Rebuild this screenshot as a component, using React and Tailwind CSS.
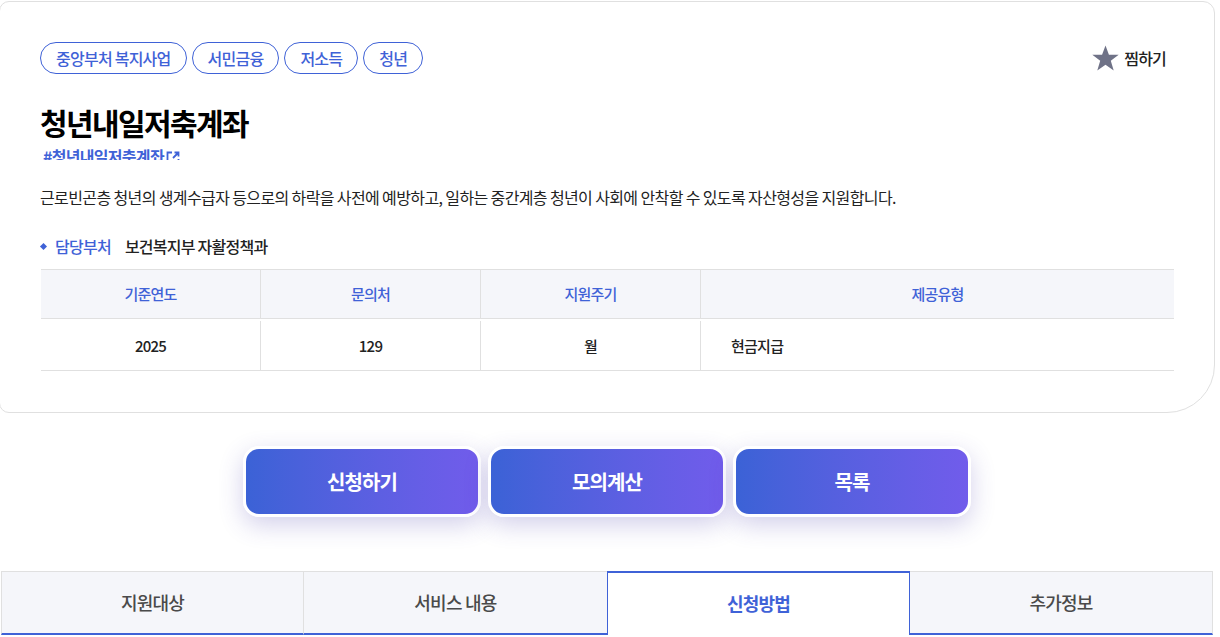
const FONT = "font-['Noto_Sans_CJK_KR','Noto_Sans',sans-serif]";

const tags = ["중앙부처 복지사업", "서민금융", "저소득", "청년"];
const tabs = ["지원대상", "서비스 내용", "신청방법", "추가정보"];
const actions = ["신청하기", "모의계산", "목록"];

const Tag = ({ children }) => (
  <span className="flex h-[32px] items-center rounded-full border border-[#3f62d7] px-[15px] text-[16px] font-medium tracking-[-0.76px] text-[#3f62d7]">
    {children}
  </span>
);

const HeadCell = ({ className = "", children }) => (
  <div className={`flex items-center justify-center border-r border-[#e0e0e0] text-[15px] font-medium tracking-[-0.75px] text-[#3f62d7] last:border-r-0 ${className}`}>
    {children}
  </div>
);

const BodyCell = ({ className = "", children }) => (
  <div className={`mt-[2px] flex items-center justify-center border-r border-[#e0e0e0] pt-[2px] text-[15px] font-medium tracking-[-0.75px] text-[#222] ${className}`}>
    {children}
  </div>
);

export default function App() {
  return (
    <div className={`h-[637px] w-[1220px] overflow-hidden bg-white pt-px ${FONT}`}>
      {/* Detail card */}
      <section className="ml-[-1px] h-[412px] w-[1216px] rounded-tr-[12px] rounded-bl-[10px] rounded-br-[48px] rounded-tl-[10px] border border-[#e0e0e0] bg-white pt-[40px] pl-[40px] pr-[40px]">
        <div className="flex h-[32px] items-center justify-between">
          <div className="flex gap-[5px]">
            {tags.map((tag) => (
              <Tag key={tag}>{tag}</Tag>
            ))}
          </div>
          <button className="mr-[8px] flex items-center gap-[5px] text-[16px] font-medium tracking-[-0.8px] text-[#222]">
            <svg width="27" height="27" viewBox="0 0 26 26" fill="#6f7287">
              <path d="M13 0.5l3.3 9h9.4l-7.6 5.7 2.8 9.3-7.9-5.6-7.9 5.6 2.8-9.3L0.3 9.5h9.4z" />
            </svg>
            찜하기
          </button>
        </div>

        <h1 className="mt-[26px] h-[44px] text-[30px] leading-[44px] font-bold tracking-[-1.6px] text-black">
          청년내일저축계좌
        </h1>
        <div className="mt-[3px] ml-[3px] flex h-[13px] items-start gap-[2px] overflow-hidden text-[16px] leading-[19px] font-bold tracking-[-0.7px] text-[#3f62d7]">
          #청년내일저축계좌
          <svg className="mt-[4px]" width="14" height="14" viewBox="0 0 14 14" fill="none" stroke="#3f62d7" strokeWidth="1.8">
            <path d="M6 1.5H1.5v11h11V8M8.5 1.5h4v4M12.5 1.5L7 7" />
          </svg>
        </div>

        <p className="mt-[25px] text-[16px] leading-[24px] tracking-[-0.62px] text-[#222]">
          근로빈곤층 청년의 생계수급자 등으로의 하락을 사전에 예방하고, 일하는 중간계층 청년이 사회에 안착할 수 있도록 자산형성을 지원합니다.
        </p>

        <div className="mt-[25px] flex h-[24px] items-center text-[16px] font-medium tracking-[-0.75px]">
          <span className="mr-[9px] ml-[1px] h-[5px] w-[5px] rotate-45 bg-[#3f62d7]" />
          <span className="mr-[14px] text-[#3f62d7]">담당부처</span>
          <span className="text-[#222]">보건복지부 자활정책과</span>
        </div>

        {/* Info table */}
        <div className="mt-[11px] ml-[1px] w-[1133px] border-y border-[#e0e0e0]">
          <div className="grid h-[49px] grid-cols-[220px_220px_220px_1fr] border-b border-[#e0e0e0] bg-[#f5f6fa]">
            <HeadCell>기준연도</HeadCell>
            <HeadCell>문의처</HeadCell>
            <HeadCell>지원주기</HeadCell>
            <HeadCell>제공유형</HeadCell>
          </div>
          <div className="grid h-[51px] grid-cols-[220px_220px_220px_1fr]">
            <BodyCell>2025</BodyCell>
            <BodyCell>129</BodyCell>
            <BodyCell>월</BodyCell>
            <BodyCell className="justify-start border-r-0 pl-[30px]">현금지급</BodyCell>
          </div>
        </div>
      </section>

      {/* Action buttons */}
      <div className="mt-[33px] flex w-[1215px] justify-center gap-[7px] pr-[1px]">
        {actions.map((label) => (
          <button
            key={label}
            className="flex h-[71px] w-[238px] items-center justify-center rounded-[16px] border-[3px] border-white bg-gradient-to-r from-[#3b62d6] to-[#715ceb] text-[20px] font-bold tracking-[-0.85px] text-white shadow-[0_8px_24px_rgba(70,60,170,0.24)]"
          >
            {label}
          </button>
        ))}
      </div>

      {/* Tabs */}
      <div className="mt-[54px] ml-[1px] grid h-[64px] w-[1212px] grid-cols-[303px_303px_303px_303px]">
        {tabs.map((tab, i) =>
          i === 2 ? (
            <div
              key={tab}
              className="flex items-center justify-center border-x border-t-2 border-[#3f62d7] bg-white pb-[2px] text-[18px] font-bold tracking-[-0.75px] text-[#3f62d7]"
            >
              {tab}
            </div>
          ) : (
            <div
              key={tab}
              className={`flex items-center justify-center border-t border-b-2 border-t-[#e0e0e0] border-b-[#3f62d7] bg-[#f5f6fa] text-[18px] font-medium tracking-[-0.75px] text-[#4a4a4a] ${i === 0 ? "border-l border-l-[#e0e0e0] border-r border-r-[#e0e0e0]" : ""} ${i === 3 ? "border-r border-r-[#e0e0e0]" : ""}`}
            >
              {tab}
            </div>
          )
        )}
      </div>
    </div>
  );
}
